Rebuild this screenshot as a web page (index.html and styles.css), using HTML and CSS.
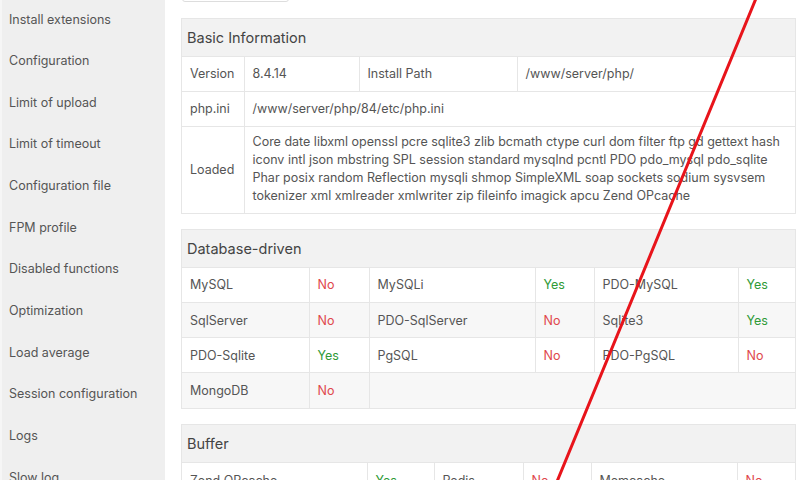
FILE: index.html
```html
<!DOCTYPE html>
<html lang="en">
<head>
  <meta charset="UTF-8">
  <title>PHP Settings</title>
  <link rel="stylesheet" href="styles.css">
</head>
<body>

  <div class="app">
    <ul class="sidebar">
      <li>Install extensions</li>
      <li>Configuration</li>
      <li>Limit of upload</li>
      <li>Limit of timeout</li>
      <li>Configuration file</li>
      <li>FPM profile</li>
      <li>Disabled functions</li>
      <li>Optimization</li>
      <li>Load average</li>
      <li>Session configuration</li>
      <li>Logs</li>
      <li>Slow log</li>
    </ul>

    <div class="main">
      <div class="toolbar">
        <button class="btn" title="phpinfo"></button>
      </div>

      <div class="panel">
        <div class="panel-title">Basic Information</div>
        <table class="basic">
          <colgroup><col><col><col><col></colgroup>
          <tr>
            <td>Version</td>
            <td>8.4.14</td>
            <td>Install Path</td>
            <td>/www/server/php/</td>
          </tr>
          <tr>
            <td>php.ini</td>
            <td colspan="3">/www/server/php/84/etc/php.ini</td>
          </tr>
          <tr>
            <td>Loaded</td>
            <td colspan="3" class="loaded">Core date libxml openssl pcre sqlite3 zlib bcmath ctype curl dom filter ftp gd gettext hash iconv intl json mbstring SPL session standard mysqlnd pcntl PDO pdo_mysql pdo_sqlite Phar posix random Reflection mysqli shmop SimpleXML soap sockets sodium sysvsem tokenizer xml xmlreader xmlwriter zip fileinfo imagick apcu Zend OPcache</td>
          </tr>
        </table>
      </div>

      <div class="panel">
        <div class="panel-title">Database-driven</div>
        <table class="db striped">
          <colgroup><col><col><col><col><col><col></colgroup>
          <tr>
            <td>MySQL</td><td class="no">No</td>
            <td>MySQLi</td><td class="yes">Yes</td>
            <td>PDO-MySQL</td><td class="yes">Yes</td>
          </tr>
          <tr>
            <td>SqlServer</td><td class="no">No</td>
            <td>PDO-SqlServer</td><td class="no">No</td>
            <td>Sqlite3</td><td class="yes">Yes</td>
          </tr>
          <tr>
            <td>PDO-Sqlite</td><td class="yes">Yes</td>
            <td>PgSQL</td><td class="no">No</td>
            <td>PDO-PgSQL</td><td class="no">No</td>
          </tr>
          <tr>
            <td>MongoDB</td><td class="no">No</td>
            <td colspan="4"></td>
          </tr>
        </table>
      </div>

      <div class="panel">
        <div class="panel-title">Buffer</div>
        <table class="buffer">
          <colgroup><col><col><col><col><col><col></colgroup>
          <tr>
            <td>Zend OPcache</td><td class="yes">Yes</td>
            <td>Redis</td><td class="no">No</td>
            <td>Memcache</td><td class="no">No</td>
          </tr>
        </table>
      </div>
    </div>
  </div>

  <svg class="mark" width="800" height="480" viewBox="0 0 800 480">
    <line x1="757" y1="-4" x2="556" y2="484" stroke="#e8141b" stroke-width="3" stroke-linecap="round"/>
  </svg>

</body>
</html>
```

FILE: styles.css
```css
body {
  margin: 0;
  font-family: Inter, "Noto Sans", sans-serif;
  font-size: 12.5px;
  color: #555;
  background: #fff;
  width: 800px;
  height: 480px;
  overflow: hidden;
  position: relative;
}

.app {
  display: flex;
  height: 480px;
}

.sidebar {
  list-style: none;
  margin: 0;
  padding: 0 0 0 2px;
  flex-shrink: 0;
  background: #efefef;
  border-left: 2px solid #f6f6f6;
  box-sizing: border-box;
  width: 165px;
}

.sidebar li {
  height: 41.65px;
  line-height: 41.65px;
  padding-left: 5px;
  white-space: nowrap;
}

.sidebar li:first-child {
  margin-top: -1.5px;
}

.main {
  padding-left: 16px;
  margin-top: -30px;
}

.toolbar {
  height: 32px;
  margin-bottom: 16px;
}

.btn {
  display: block;
  width: 107px;
  height: 32px;
  margin-left: 1px;
  background: #fff;
  border: 1px solid #ddd;
  border-radius: 3px;
}

.panel {
  width: 615px;
  border: 1px solid #e6e6e6;
  box-sizing: border-box;
  margin-bottom: 15px;
}

.panel-title {
  height: 37px;
  line-height: 37px;
  padding-left: 5px;
  background: #f2f2f2;
  border-bottom: 1px solid #e6e6e6;
  font-size: 14.5px;
  color: #444;
}

table {
  width: 100%;
  border-collapse: collapse;
  border-style: hidden;
  table-layout: fixed;
}

td {
  border: 1px solid #e6e6e6;
  height: 35px;
  padding: 0 8px;
  box-sizing: border-box;
  white-space: nowrap;
}

.basic tr:first-child td {
  height: 34px;
}

td.loaded {
  white-space: normal;
  line-height: 18px;
  padding: 6px 8px 8px 8px;
}

.striped tr:nth-child(even) td {
  background: #f7f7f7;
}

.yes {
  color: #2f9a37;
}

.no {
  color: #e0474c;
}

.basic col:nth-child(1) { width: 62px; }
.basic col:nth-child(2) { width: 115px; }
.basic col:nth-child(3) { width: 158px; }

.db col:nth-child(1) { width: 127px; }
.db col:nth-child(2) { width: 60px; }
.db col:nth-child(3) { width: 166px; }
.db col:nth-child(4) { width: 59px; }
.db col:nth-child(5) { width: 144px; }

.buffer col:nth-child(1) { width: 185px; }
.buffer col:nth-child(2) { width: 67px; }
.buffer col:nth-child(3) { width: 89px; }
.buffer col:nth-child(4) { width: 68px; }
.buffer col:nth-child(5) { width: 146px; }

.mark {
  position: absolute;
  left: 0;
  top: 0;
  pointer-events: none;
}
```
